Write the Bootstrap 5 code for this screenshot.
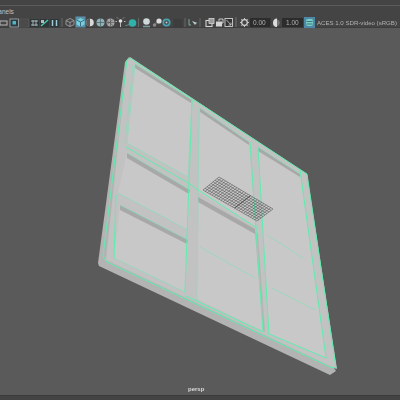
<!DOCTYPE html>
<html lang="en">
<head>
<meta charset="UTF-8">
<meta name="viewport" content="width=device-width, initial-scale=1.0">
<title>persp</title>
<link rel="stylesheet" href="https://cdn.jsdelivr.net/npm/bootstrap@5.3.0/dist/css/bootstrap.min.css">
<style>
html, body { width: 400px; height: 400px; overflow: hidden; background: #5a5a5a; }
.maya-ui { width: 400px; height: 400px; font-family: "Liberation Sans", Arial, sans-serif; color: #c0c0c0; }
.top-strip { height: 6px; background: #444; border-bottom: 1px solid #5c5c5c; }
.menu-row { height: 8px; background: #444; font-size: 6.5px; line-height: 11px; color: #c0c0c0; }
.menu-label { margin-left: -6px; vertical-align: top; }
.icon-row { height: 14px; background: #444; border-bottom: 1px solid #3d3d3d; filter: blur(.35px); }
.icon-row svg { display: block; width: 400px; height: 13px; overflow: visible; }
.icon-row text { font-family: "Liberation Sans", Arial, sans-serif; font-size: 6.5px; fill: #b2b2b2; }
.view-area { background: #5a5a5a; }
.view-area svg { display: block; filter: blur(.45px); }
.persp-label { bottom: 2px; left: 188px; font-size: 6px; font-weight: 700; color: #dcdcdc; line-height: 8px; filter: blur(.25px); }
.foot-row { height: 5px; background: #444; border-top: 1px solid #3a3a3a; }
.wire { fill: none; stroke: #5eeeae; stroke-width: 1; }
.wire-soft { fill: none; stroke: #74e4b4; stroke-width: .7; opacity: .75; }
.pane { fill: #c8c8c8; }
.bevel { fill: #a8a8a8; }
.mesh-line { stroke: #3c3c3c; stroke-width: .55; opacity: .85; }
</style>
</head>
<body>
<div class="maya-ui position-relative overflow-hidden d-flex flex-column">
  <div class="top-strip flex-shrink-0"></div>
  <div class="menu-row flex-shrink-0 overflow-hidden"><span class="menu-label d-inline-block">Panels</span></div>
  <div class="icon-row flex-shrink-0">
    <svg viewBox="0 13 400 13" xmlns="http://www.w3.org/2000/svg">
      <!-- layout icons -->
      <rect x="0" y="20" width="7" height="4" fill="none" stroke="#b8b8b8"/>
      <rect x="10" y="18" width="8.500" height="8" fill="#2f3a3e" stroke="#a9b2b4" stroke-width=".8"/><rect x="12.500" y="20" width="3.500" height="3.500" fill="#4fb7c4"/>
      <rect x="20" y="18" width="8.500" height="8" fill="#4a4a4a" stroke="#565656" stroke-width=".8"/>
      <rect x="30" y="18" width="9" height="8" fill="#2e3638"/><path d="M31 20h7M31 24h7M33 19v6M36 19v6" stroke="#aebebe" stroke-width=".9"/>
      <rect x="40" y="18" width="9" height="8" fill="#2e3638"/><path d="M41 25l7-6" stroke="#4fc0a8" stroke-width="1.600"/><rect x="41" y="19" width="3" height="3" fill="#aebebe"/>
      <rect x="50" y="18" width="9" height="8" fill="#2e3638"/><path d="M52.500 19v6M56.500 19v6" stroke="#a0cbd6" stroke-width="1.500"/>
      <rect x="61.500" y="17" width="1" height="9" fill="#666"/>
      <!-- shading icons -->
      <path d="M70 17.500l4 2v4l-4 2-4-2v-4zM66 19.500l4 2 4-2M70 21.500v4" fill="none" stroke="#a9a9a9" stroke-width=".8"/>
      <rect x="75.500" y="15.500" width="10" height="11" fill="#5b8fac"/>
      <path d="M80.500 17l4 2v4.500l-4 2-4-2V19z" fill="#74d0dc"/><path d="M76.500 19l4 2 4-2M80.500 21v4.500" fill="none" stroke="#2d5568" stroke-width=".8"/>
      <circle cx="90" cy="21.500" r="3.800" fill="#d8d8d8"/><path d="M90 17.700a3.800 3.800 0 0 0 0 7.600z" fill="#5a5a5a"/>
      <circle cx="100.500" cy="21.500" r="4" fill="#8fb3bb"/><path d="M96.500 21.500h8M100.500 17.500v8" stroke="#4a5b60" stroke-width=".7"/>
      <circle cx="110.500" cy="21.500" r="4" fill="#a8a8a8"/><path d="M107 19.500l6 5M107 23.500l6-5M110.500 17.500v8M106.500 21.500h8" stroke="#5a5a5a" stroke-width=".7"/>
      <circle cx="120.500" cy="20" r="1.800" fill="#e4e4e4"/><path d="M120.500 21.500v4.500M118 17.500l-1-1M123 17.500l1-1M117 20.500h-1.500M124 20.500h1.500" stroke="#d6d6d6" stroke-width=".8"/>
      <circle cx="132.500" cy="22" r="3.800" fill="#2fb2ab"/><path d="M125.500 24.500c1.500 0 2.500-.5 3.500-1" fill="none" stroke="#6a8f8f"/>
      <rect x="138" y="17" width="1" height="9" fill="#666"/>
      <!-- display icons -->
      <circle cx="146.500" cy="20.500" r="3.300" fill="#cfd8d8"/><path d="M143 25.500h7" stroke="#7c9c9c" stroke-width="1.500"/>
      <path d="M154 24.500l5-5" stroke="#5d5d5d" stroke-width="2"/><circle cx="159" cy="20" r="2.600" fill="#dcdcdc"/><circle cx="154.500" cy="24" r="1.700" fill="#8a8a8a"/>
      <circle cx="166.500" cy="21.500" r="3.200" fill="none" stroke="#45a5b5" stroke-width="1.700"/><circle cx="166.500" cy="21.500" r="1" fill="#cfcfcf"/>
      <rect x="173.500" y="18" width="9" height="8" fill="#3d3d3d"/>
      <rect x="184.500" y="17" width="1" height="9" fill="#666"/>
      <path d="M189 18v6h2" fill="none" stroke="#7da69a" stroke-width="1"/><path d="M192 20l3 4 1-1.500 1.500-.5z" fill="#b7cfcf"/>
      <rect x="199.500" y="17" width="1" height="9" fill="#666"/>
      <!-- panel icons -->
      <rect x="206" y="19.500" width="6" height="6" fill="none" stroke="#d4d4d4" stroke-width="1.100"/><rect x="209" y="17.500" width="5" height="5" fill="#9a9a9a" stroke="#d4d4d4" stroke-width=".8"/>
      <rect x="216" y="20.500" width="6" height="5" fill="#d4d4d4"/><path d="M219 20v-2h4v4h-1" fill="none" stroke="#d4d4d4" stroke-width=".9"/>
      <rect x="225" y="17.500" width="7.500" height="8" fill="#333" stroke="#cfcfcf" stroke-width=".9"/><path d="M226.500 19l4.500 5M231 21.500V24h-2.500" fill="none" stroke="#cfcfcf" stroke-width=".8"/>
      <rect x="235.500" y="16" width="1" height="10" fill="#707070"/>
      <!-- exposure and gamma -->
      <circle cx="244.500" cy="21.500" r="2.800" fill="none" stroke="#d8d8d8" stroke-width="1.200"/><path d="M244.500 17v1.500M244.500 24.500V26M240 21.500h1.500M247.500 21.500h1.500M241.300 18.300l1 1M246.700 23.700l1 1M247.700 18.300l-1 1M242.300 23.700l-1 1" stroke="#cfcfcf" stroke-width=".9"/>
      <rect x="250" y="17" width="20.500" height="9" fill="#2c2c2c"/>
      <text x="253" y="24">0.00</text>
      <path d="M277 17.500v8.500c-3 0-4-2-4-4.300s1.500-4.200 4-4.200z" fill="#ddd"/><path d="M277 18.500c2 .5 2.800 2 2.800 3.200s-.8 3-2.800 3.500z" fill="#777"/>
      <rect x="282" y="17" width="21" height="9" fill="#2c2c2c"/>
      <text x="286" y="24">1.00</text>
      <rect x="304" y="16" width="11" height="11" fill="#4f87a6"/>
      <rect x="306" y="18" width="7" height="7" rx="2" fill="#79d0c8"/><path d="M306.500 20.500h6M306.500 23h6" stroke="#2d5b6b" stroke-width=".8"/>
      <text x="317" y="24" style="font-size:6.100px">ACES 1.0 SDR-video (sRGB)</text>
    </svg>
  </div>
  <div class="view-area position-relative flex-grow-1">
    <svg width="400" height="367" viewBox="0 28 400 367" xmlns="http://www.w3.org/2000/svg">
      <!-- plate sides -->
      <polygon points="129,57 125,62 98,263 99,266 330,375 336,371 330,362 110,255" fill="#b3b3b3"/>
      <polygon points="130,57 307,174 337,369 330,366 106,260 127,61" fill="#c2c2c2"/>
      <!-- panes -->
      <polygon class="pane" points="135,64 192,100 188,177 127,143"/>
      <polygon class="pane" points="127,153 190,190 188,230 118,193"/>
      <polygon class="pane" points="120,205 188,240 185,292 114,258"/>
      <polygon class="pane" points="200,108 249,142 255,227 198,192"/>
      <polygon class="pane" points="198,201 255,232 263,331 197,299"/>
      <polygon class="pane" points="258,147 300,174 326,358 269,334"/>
      <!-- bevels -->
      <polygon class="bevel" points="135,64 192,100 191,103 135,68"/>
      <polygon class="bevel" points="127,153 190,190 189,194 127,158"/>
      <polygon class="bevel" points="120,205 188,240 187,244 120,210"/>
      <polygon class="bevel" points="200,108 249,142 249,145 200,112"/>
      <polygon class="bevel" points="198,197 255,229 255,234 198,202"/>
      <polygon class="bevel" points="258,147 300,174 300,177 258,151"/>
      <polygon class="bevel" points="255,232 263,331 265,332 258,234" opacity=".5"/>
      <!-- green edges, outer -->
      <polyline class="wire" points="107,262 103,256 127,60 130,58 307,174 336,368 330,367 107,262"/>
      <polyline class="wire-soft" points="133,65 125,143"/>
      <!-- left column -->
      <polyline class="wire" points="192,100 185,292"/>
      <polyline class="wire-soft" points="135,64 192,100 188,177 127,143 135,64"/>
      <polyline class="wire" points="126,147 190,184 198,190 257,228"/>
      <polyline class="wire-soft" points="127,153 190,190"/>
      <polyline class="wire-soft" points="118,193 188,230"/>
      <polyline class="wire" points="116,195 114,258"/>
      <polyline class="wire-soft" points="120,205 188,240"/>
      <polyline class="wire-soft" points="114,258 185,292"/>
      <!-- middle and right columns -->
      <polyline class="wire-soft" points="199,107 197,300"/>
      <polyline class="wire-soft" points="200,108 249,142"/>
      <polyline class="wire" points="250,142 263,332"/>
      <polyline class="wire" points="258,147 269,335"/>
      <polyline class="wire-soft" points="258,147 300,174"/>
      <polyline class="wire" points="300,170 326,358 269,334"/>
      <polyline class="wire" points="186,296 263,332"/>
      <polyline class="wire-soft" points="200,247 255,278"/>
      <polyline class="wire-soft" points="267,235 303,258"/>
      <polyline class="wire-soft" points="272,288 315,310"/>
      <!-- floor grid -->
      <g id="meshGrid"></g>
    </svg>
    <div class="persp-label position-absolute">persp</div>
  </div>
  <div class="foot-row flex-shrink-0"></div>
</div>
<script>
    // grid lying on the plate, corners in page pixels
    let A = [219, 177], B = [273, 209], C = [257, 221], D = [203, 190];
    let grid = document.getElementById("meshGrid");
    function addLine(p, q, extra) {
        let line = document.createElementNS("http://www.w3.org/2000/svg", "line");
        line.setAttribute("x1", p[0]); line.setAttribute("y1", p[1]);
        line.setAttribute("x2", q[0]); line.setAttribute("y2", q[1]);
        line.setAttribute("class", "mesh-line");
        if (extra) line.style.strokeWidth = extra;
        grid.appendChild(line);
    }
    function mix(p, q, t) { return [p[0] + (q[0] - p[0]) * t, p[1] + (q[1] - p[1]) * t]; }
    for (let i = 0; i <= 24; i++) addLine(mix(A, B, i / 24), mix(D, C, i / 24), i == 14 ? 1.1 : 0);
    for (let j = 0; j <= 8; j++) addLine(mix(A, D, j / 8), mix(B, C, j / 8));
</script>
<script src="https://cdn.jsdelivr.net/npm/bootstrap@5.3.0/dist/js/bootstrap.bundle.min.js"></script>
</body>
</html>
